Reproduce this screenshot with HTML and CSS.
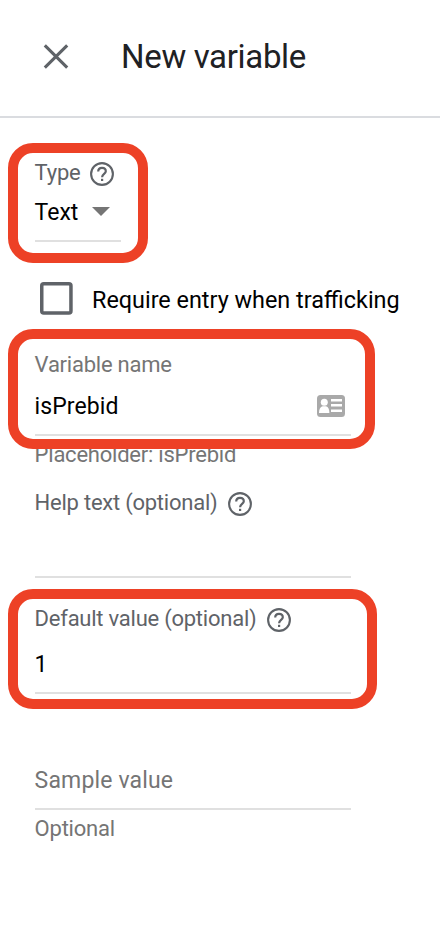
FILE: index.html
```html
<!DOCTYPE html>
<html lang="en">
<head>
<meta charset="utf-8">
<title>New variable</title>
<link rel="stylesheet" href="styles.css">
</head>
<body>
<svg class="defs" width="0" height="0">
  <symbol id="help" viewBox="0 0 24 24"><circle cx="12" cy="12" r="10.9" fill="none" stroke="currentColor" stroke-width="2.1"/><path d="M8.2 9.5C8.2 7.3 9.8 5.9 12 5.9s3.8 1.4 3.8 3.4c0 2.5-3.7 2.8-3.7 5.9" fill="none" stroke="currentColor" stroke-width="2.2"/><path d="M11 16.8h2.2V19H11z" fill="currentColor"/></symbol>
</svg>
<header class="header">
  <svg class="close" viewBox="0 0 26 26"><path d="M1.8 1.3l22.4 22.4M24.2 1.3L1.8 23.7"/></svg>
  <h1 class="title">New variable</h1>
</header>
<main class="form">
  <section class="field type">
    <div class="label"><span>Type</span><svg class="help"><use href="#help"/></svg></div>
    <div class="value select"><span>Text</span><svg class="arrow" viewBox="0 0 18 9"><path d="M0 0h18L9 9z"/></svg></div>
    <div class="marker"></div>
  </section>
  <label class="check"><svg class="box" viewBox="0 0 33 33"><rect x="1.75" y="1.75" width="29.2" height="29.2" rx="2"/></svg><span>Require entry when trafficking</span></label>
  <section class="field name">
    <div class="label soft"><span>Variable name</span></div>
    <div class="value"><span>isPrebid</span>
      <svg class="card" viewBox="0 0 28 22"><rect width="28" height="22" rx="3.5" fill="#a9a9a9"/><circle cx="7.3" cy="7.3" r="3.5" fill="#fff"/><path d="M2 18c0-4 1.2-6 3.6-6.8h3.4c2.4.8 3.4 2.8 3.4 6.8zM14 4h11v2.6H14zM14 9h11v2.6H14zM14 14.4h11V17H14z" fill="#fff"/></svg>
    </div>
    <div class="marker"></div>
  </section>
  <div class="hint"><span>Placeholder: isPrebid</span></div>
  <section class="field helptext">
    <div class="label"><span>Help text (optional)</span><svg class="help"><use href="#help"/></svg></div>
  </section>
  <section class="field default">
    <div class="label"><span>Default value (optional)</span><svg class="help"><use href="#help"/></svg></div>
    <div class="value"><span>1</span></div>
    <div class="marker"></div>
  </section>
  <section class="field sample">
    <div class="label soft"><span>Sample value</span></div>
  </section>
  <div class="hint"><span>Optional</span></div>
</main>
</body>
</html>
```
FILE: styles.css
```css
* { box-sizing: border-box; }
body { margin: 0; background: #fff; font: 23px/28px Roboto, sans-serif; color: #000; }
svg { display: block; flex: none; }
.defs { position: absolute; }
.header { height: 118px; border-bottom: 2px solid #dadce0; display: flex; align-items: center; padding: 0 0 3px 43px; }
.close { width: 26px; height: 26px; stroke: #5f6368; stroke-width: 3.1; fill: none; }
.title { margin: 0 0 0 52px; font-size: 33px; line-height: 40px; letter-spacing: -.33px; font-weight: 400; color: #202124; white-space: nowrap; }
.form { padding: 40px 0 0 35px; white-space: nowrap; }
.field { position: relative; width: 316px; border-bottom: 2px solid #e0e0e0; }
.label { display: flex; align-items: center; height: 28px; font-size: 22px; letter-spacing: -.24px; color: #5f6368; }
.label.soft, .hint { color: #757575; }
.label span, .value span, .hint span { display: block; padding-top: 2px; margin-left: -.4px; }
.help { width: 24px; height: 24px; margin: 3.4px 0 0 10.6px; overflow: visible; }
.value { display: flex; align-items: center; height: 28px; }
.type { width: 86px; height: 84px; }
.type .help { margin-left: 9.7px; }
.type .value { margin-top: 12px; }
.arrow { width: 18px; height: 9px; margin: 0 0 2px 13.6px; fill: #757575; }
.check { display: flex; align-items: center; height: 32px; margin: 40px 0 0 5px; font-size: 23.38px; }
.box { width: 33px; height: 33px; fill: none; stroke: #5f6368; stroke-width: 3.5; margin: 1px 19px 0 0; }
.check span { margin-top: 3px; }
.name { height: 86px; margin-top: 36px; }
.name .value { margin-top: 14px; letter-spacing: .08px; }
.card { width: 28px; height: 22px; margin: 0 6px 0 auto; }
.hint { height: 28px; margin-top: 4px; font-size: 22px; letter-spacing: -.23px; }
.hint span, .label span { padding-top: 1px; margin-top: 1px; }
.helptext { height: 90px; margin-top: 20px; }
.default { height: 90px; margin-top: 26px; }
.default .value { margin-top: 18px; }
.sample { height: 44px; margin-top: 72px; }
.sample .label { font-size: 23px; letter-spacing: .15px; }
/* Highlight rings drawn over the form */
.marker { position: absolute; z-index: 1; left: -27px; height: 120px; border: 10px solid #ed4126; border-radius: 25px; }
.type .marker { top: -15px; width: 140px; }
.name .marker { top: -21px; width: 367px; }
.default .marker { top: -15px; width: 369px; }
```
